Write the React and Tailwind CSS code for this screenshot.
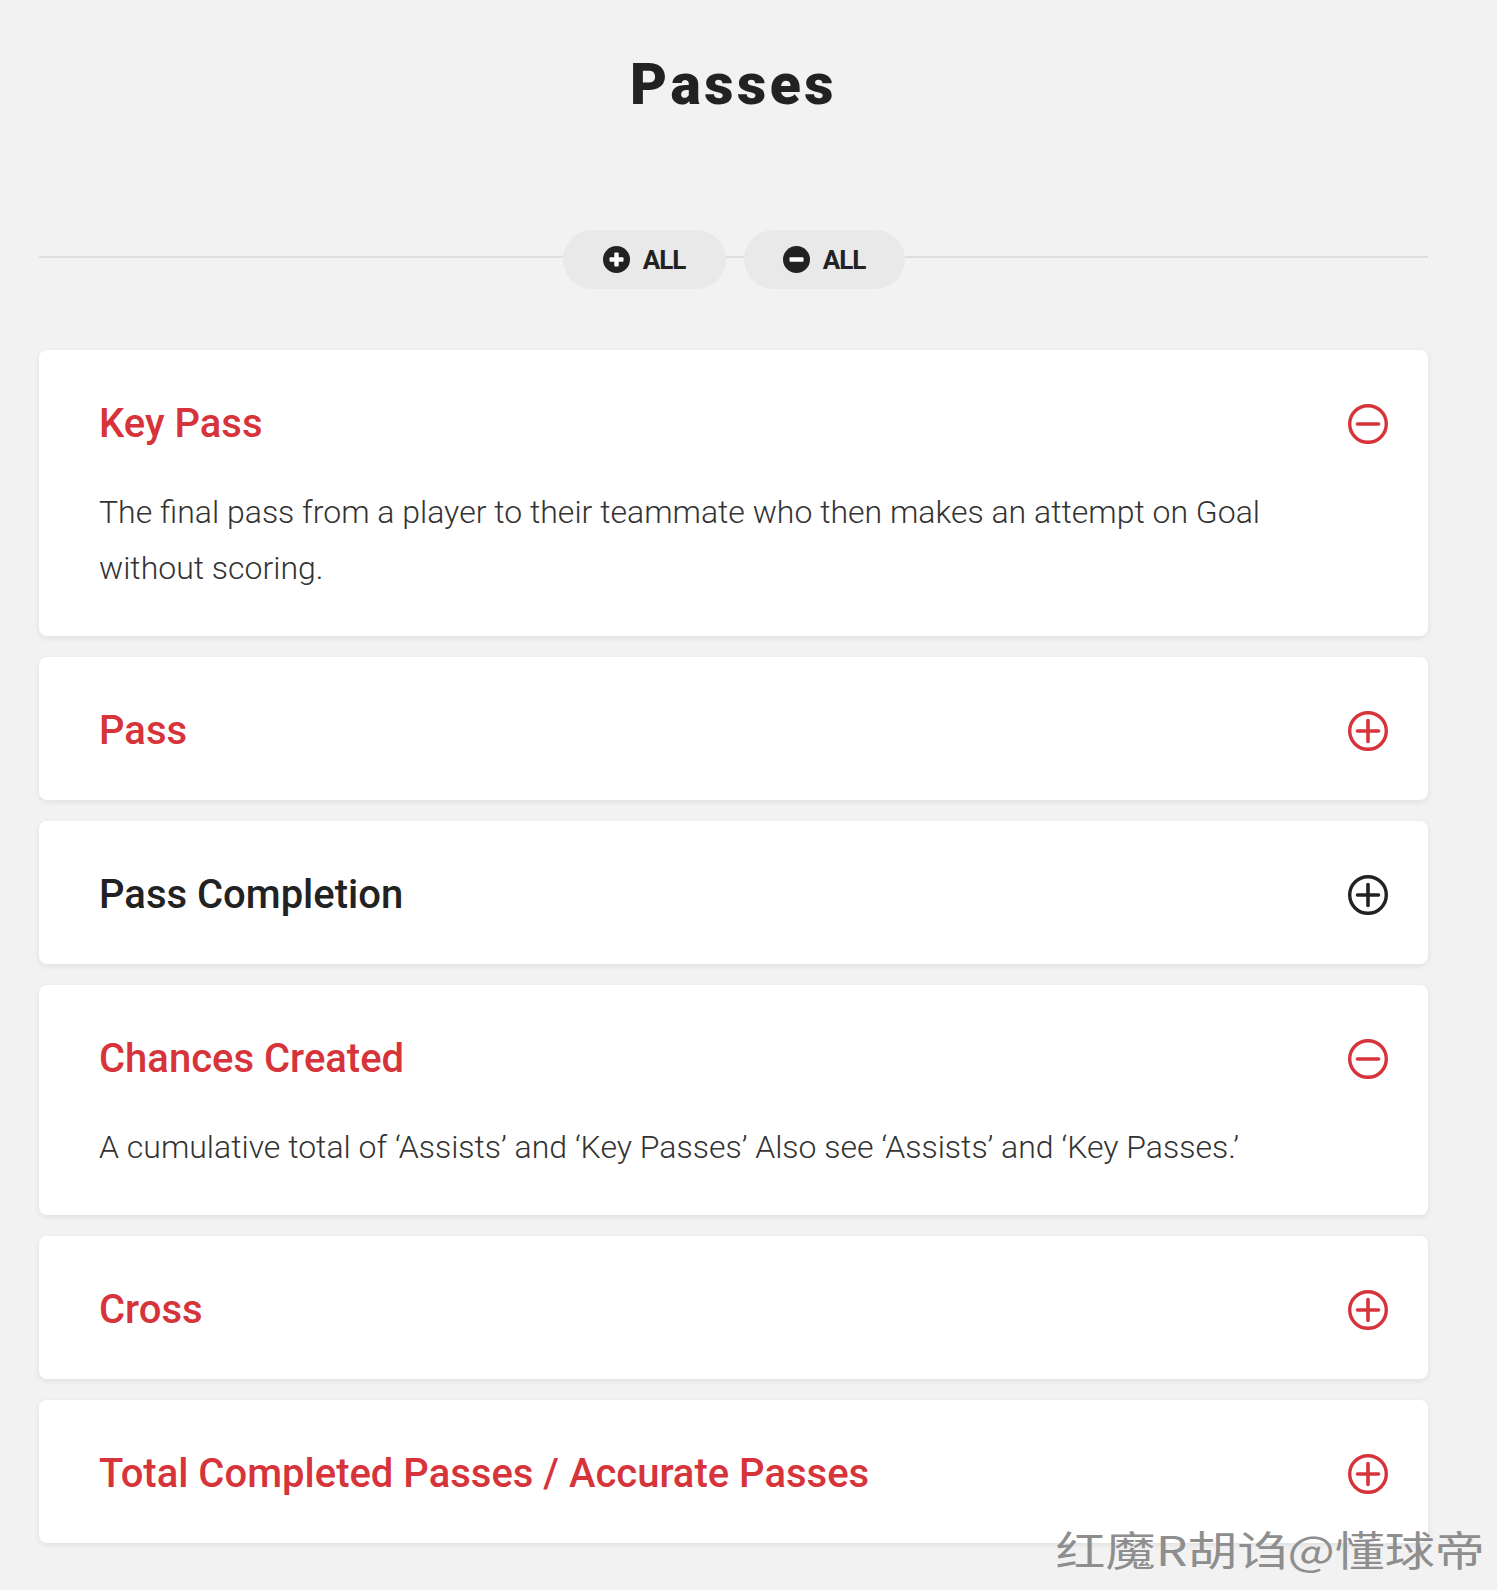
import React from "react";

const RED = "#d6343a";

function CircleIcon({ minus, color }) {
  return (
    <svg width="40" height="40" viewBox="0 0 40 40" fill="none" className="shrink-0">
      <circle cx="20" cy="20" r="18.3" stroke={color} strokeWidth="3.4" />
      <line x1="9.5" y1="20" x2="30.5" y2="20" stroke={color} strokeWidth="3.6" strokeLinecap="round" />
      {!minus && (
        <line x1="20" y1="9.5" x2="20" y2="30.5" stroke={color} strokeWidth="3.6" strokeLinecap="round" />
      )}
    </svg>
  );
}

function FilledIcon({ minus }) {
  return (
    <svg width="27" height="27" viewBox="0 0 27 27" className="shrink-0">
      <circle cx="13.5" cy="13.5" r="13.5" fill="#222" />
      <rect x="6.5" y="11.3" width="14" height="4.4" rx="1" fill="#fff" />
      {!minus && <rect x="11.3" y="6.5" width="4.4" height="14" rx="1" fill="#fff" />}
    </svg>
  );
}

const items = [
  {
    title: "Key Pass",
    open: true,
    color: RED,
    text: "The final pass from a player to their teammate who then makes an attempt on Goal without scoring.",
  },
  { title: "Pass", open: false, color: RED },
  { title: "Pass Completion", open: false, color: "#222222" },
  {
    title: "Chances Created",
    open: true,
    color: RED,
    text: "A cumulative total of \u2018Assists\u2019 and \u2018Key Passes\u2019 Also see \u2018Assists\u2019 and \u2018Key Passes.\u2019",
  },
  { title: "Cross", open: false, color: RED },
  { title: "Total Completed Passes / Accurate Passes", open: false, color: RED },
];

export default function App() {
  return (
    <div
      className="relative min-h-[1590px] w-full overflow-hidden bg-[#f2f2f2]"
      style={{ fontFamily: "Roboto, 'Noto Sans', sans-serif" }}
    >
      <div className="ml-[39px] w-[1389px] pt-[56px]">
        <h1 className="text-center text-[57px] font-black leading-[57px] tracking-[3.5px] text-[#222]">
          Passes
        </h1>

        <div className="relative mt-[117px] flex h-[59px] items-center justify-center">
          <div className="absolute left-0 right-0 top-[26px] h-[2px] bg-[#dedede]" />
          <div className="relative flex gap-[18px]">
            <button className="flex h-[59px] w-[163px] items-center justify-center gap-[13px] rounded-full bg-[#e9e9e9]">
              <FilledIcon />
              <span className="text-[26px] font-bold leading-none tracking-[-1px] text-[#222]">ALL</span>
            </button>
            <button className="flex h-[59px] w-[161px] items-center justify-center gap-[13px] rounded-full bg-[#e9e9e9]">
              <FilledIcon minus />
              <span className="text-[26px] font-bold leading-none tracking-[-1px] text-[#222]">ALL</span>
            </button>
          </div>
        </div>

        <div className="mt-[61px] flex flex-col gap-[21px]">
          {items.map((it) => (
            <div
              key={it.title}
              className={`rounded-[8px] bg-white pl-[60px] pr-[40px] pt-[50px] shadow-[0_2px_6px_rgba(0,0,0,0.08)] ${
                it.open ? "pb-[40px]" : "pb-[45px]"
              }`}
            >
              <div className="flex h-[48px] items-center justify-between">
                <h2
                  className="text-[40px] font-medium leading-[48px]"
                  style={{ color: it.color }}
                >
                  {it.title}
                </h2>
                <CircleIcon minus={it.open} color={it.color} />
              </div>
              {it.open && (
                <p className="mt-[36px] max-w-[1200px] text-[32px] font-light leading-[56px] text-[#333]">
                  {it.text}
                </p>
              )}
            </div>
          ))}
        </div>
      </div>

      <div
        className="absolute bottom-[21px] right-[12px] origin-right scale-x-[1.22] whitespace-nowrap text-[41px] leading-none text-[#8e8e8e]"
        style={{ fontFamily: "'Noto Sans CJK SC', 'Noto Sans', sans-serif" }}
      >
        红魔R胡诌@懂球帝
      </div>
    </div>
  );
}
